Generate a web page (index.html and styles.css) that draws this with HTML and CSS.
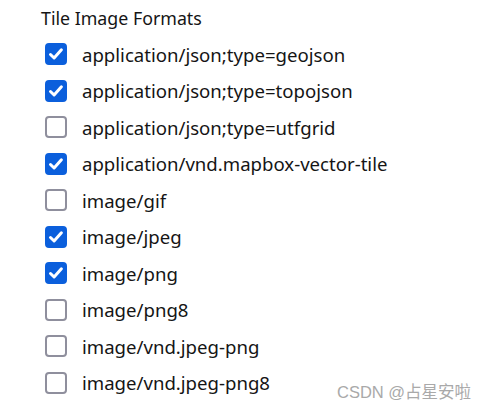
FILE: index.html
```html
<!DOCTYPE html>
<html>
<head>
<meta charset="utf-8">
<link rel="stylesheet" href="styles.css">
</head>
<body>
<div class="panel">
  <div class="title">Tile Image Formats</div>
  <ul class="list">
    <li class="item"><span class="box on"><svg viewBox="0 0 22 22"><path d="M5.5 11.5l3.6 3.5 7.3-8.2" /></svg></span><span class="label">application/json;type=geojson</span></li>
    <li class="item"><span class="box on"><svg viewBox="0 0 22 22"><path d="M5.5 11.5l3.6 3.5 7.3-8.2" /></svg></span><span class="label">application/json;type=topojson</span></li>
    <li class="item"><span class="box"></span><span class="label">application/json;type=utfgrid</span></li>
    <li class="item"><span class="box on"><svg viewBox="0 0 22 22"><path d="M5.5 11.5l3.6 3.5 7.3-8.2" /></svg></span><span class="label">application/vnd.mapbox-vector-tile</span></li>
    <li class="item"><span class="box"></span><span class="label">image/gif</span></li>
    <li class="item"><span class="box on"><svg viewBox="0 0 22 22"><path d="M5.5 11.5l3.6 3.5 7.3-8.2" /></svg></span><span class="label">image/jpeg</span></li>
    <li class="item"><span class="box on"><svg viewBox="0 0 22 22"><path d="M5.5 11.5l3.6 3.5 7.3-8.2" /></svg></span><span class="label">image/png</span></li>
    <li class="item"><span class="box"></span><span class="label">image/png8</span></li>
    <li class="item"><span class="box"></span><span class="label">image/vnd.jpeg-png</span></li>
    <li class="item"><span class="box"></span><span class="label">image/vnd.jpeg-png8</span></li>
  </ul>
  <div class="watermark">CSDN @占星安啦</div>
</div>
</body>
</html>
```
FILE: styles.css
```css
html, body {
  margin: 0;
  padding: 0;
  background: #ffffff;
}
.panel {
  width: 490px;
  height: 410px;
  position: relative;
  box-sizing: border-box;
  padding: 7px 0 0 41px;
  font-family: "Noto Sans", "Liberation Sans", sans-serif;
  color: #151515;
}
.title {
  font-size: 17.8px;
  line-height: 22px;
  margin-bottom: 7px;
}
.list {
  list-style: none;
  margin: 0;
  padding: 0 0 0 4px;
}
.item {
  display: flex;
  align-items: center;
  height: 36.5px;
  font-size: 18.6px;
}
.box {
  width: 22px;
  height: 22px;
  box-sizing: border-box;
  border: 2px solid #8f8f9d;
  border-radius: 4px;
  margin-right: 15px;
  flex: none;
  display: flex;
}
.box.on {
  background: #0b5fdc;
  border-color: #0b5fdc;
}
.box svg {
  width: 22px;
  height: 22px;
  margin: -2px;
}
.box svg path {
  fill: none;
  stroke: #ffffff;
  stroke-width: 3;
  stroke-linecap: round;
  stroke-linejoin: round;
}
.watermark {
  position: absolute;
  left: 337px;
  top: 381px;
  font-size: 16.5px;
  line-height: 22px;
  color: #a9a9a9;
  font-family: "Liberation Sans", "Noto Sans CJK SC", sans-serif;
}
```
